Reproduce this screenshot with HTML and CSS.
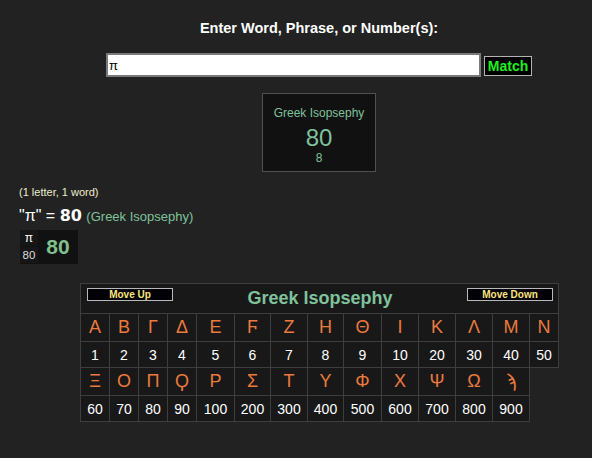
FILE: index.html
```html
<!DOCTYPE html>
<html lang="en">
<head>
<meta charset="utf-8">
<title>Greek Isopsephy</title>
<link rel="stylesheet" href="styles.css">
</head>
<body>
<div class="page">
  <div class="center">
    <div class="prompt">Enter Word, Phrase, or Number(s):</div>
    <form class="search">
      <input class="search-input" type="text" value="π">
      <button class="match-btn" type="button">Match</button>
    </form>
    <div class="result">
      <div class="result-name">Greek Isopsephy</div>
      <div class="result-value">80</div>
      <div class="result-reduced">8</div>
    </div>
  </div>

  <div class="summary">
    <div class="counts">(1 letter, 1 word)</div>
    <div class="equation"><span class="quote">"π"</span> = <span class="total">80</span> <span class="cipher">(Greek Isopsephy)</span></div>
    <div class="breakdown">
      <div class="letter-col">
        <div class="letter-cell">π</div>
        <div class="letter-cell val">80</div>
      </div>
      <div class="sum">80</div>
    </div>
  </div>

  <div class="chart">
    <div class="chart-head">
      <button class="move-btn" type="button">Move Up</button>
      <div class="chart-title">Greek Isopsephy</div>
      <button class="move-btn" type="button">Move Down</button>
    </div>
    <div class="cell ch">Α</div><div class="cell ch">Β</div><div class="cell ch">Γ</div><div class="cell ch">Δ</div><div class="cell ch">Ε</div><div class="cell ch">Ϝ</div><div class="cell ch">Ζ</div><div class="cell ch">Η</div><div class="cell ch">Θ</div><div class="cell ch">Ι</div><div class="cell ch">Κ</div><div class="cell ch">Λ</div><div class="cell ch">Μ</div><div class="cell ch">Ν</div>
    <div class="cell num">1</div><div class="cell num">2</div><div class="cell num">3</div><div class="cell num">4</div><div class="cell num">5</div><div class="cell num">6</div><div class="cell num">7</div><div class="cell num">8</div><div class="cell num">9</div><div class="cell num">10</div><div class="cell num">20</div><div class="cell num">30</div><div class="cell num">40</div><div class="cell num">50</div>
    <div class="cell ch">Ξ</div><div class="cell ch">Ο</div><div class="cell ch">Π</div><div class="cell ch">Ϙ</div><div class="cell ch">Ρ</div><div class="cell ch">Σ</div><div class="cell ch">Τ</div><div class="cell ch">Υ</div><div class="cell ch">Φ</div><div class="cell ch">Χ</div><div class="cell ch">Ψ</div><div class="cell ch">Ω</div><div class="cell ch">ϡ</div>
    <div class="cell num row-start">60</div><div class="cell num">70</div><div class="cell num">80</div><div class="cell num">90</div><div class="cell num">100</div><div class="cell num">200</div><div class="cell num">300</div><div class="cell num">400</div><div class="cell num">500</div><div class="cell num">600</div><div class="cell num">700</div><div class="cell num">800</div><div class="cell num">900</div>
  </div>
</div>
</body>
</html>
```

FILE: styles.css
```css
* { box-sizing: border-box; }

html, body {
  margin: 0;
  padding: 0;
  background: #222222;
}

body {
  font-family: "Liberation Sans", Arial, "DejaVu Sans", sans-serif;
  color: #ffffff;
}

.page {
  padding-top: 19px;
}

.center {
  padding-left: 46px;
  display: flex;
  flex-direction: column;
  align-items: center;
}

.prompt {
  font-size: 14.5px;
  font-weight: bold;
  line-height: 18px;
  height: 18px;
}

.search {
  margin: 16px 0 0 0;
  display: flex;
  align-items: center;
  gap: 3px;
}

.search-input {
  width: 375px;
  height: 24px;
  border: 2px solid #7a7a7a;
  background: #ffffff;
  color: #000000;
  font-family: "Liberation Sans", Arial, sans-serif;
  font-size: 13px;
  padding: 0 1px;
  margin: 0;
  outline: none;
}

.match-btn {
  width: 48px;
  height: 20px;
  margin-top: 2px;
  background: #000000;
  border: 1px solid #b4b4b4;
  color: #22ee22;
  font-family: "Liberation Sans", Arial, sans-serif;
  font-size: 14px;
  font-weight: bold;
  padding: 0;
  line-height: 18px;
}

.result {
  margin-top: 16px;
  width: 114px;
  height: 79px;
  background: #111111;
  border: 1px solid #505050;
  padding-top: 12px;
  display: flex;
  flex-direction: column;
  align-items: center;
  color: #7fc29b;
}

.result-name {
  font-size: 12px;
  line-height: 14px;
}

.result-value {
  margin-top: 4px;
  font-size: 24px;
  line-height: 28px;
}

.result-reduced {
  font-size: 12px;
  line-height: 12px;
}

.summary {
  padding-left: 19px;
  margin-top: 13px;
}

.counts {
  font-size: 11px;
  line-height: 14px;
  color: #efebc8;
}

.equation {
  margin-top: 7px;
  font-size: 16px;
  line-height: 20px;
  height: 20px;
  white-space: nowrap;
}

.total {
  font-family: "DejaVu Sans", sans-serif;
  font-weight: bold;
  font-size: 16px;
}

.cipher {
  font-size: 13px;
  color: #7fc29b;
}

.breakdown {
  margin-top: 4px;
  margin-left: 1px;
  width: 58px;
  height: 34px;
  background: #111111;
  display: flex;
}

.letter-col {
  width: 18px;
  display: flex;
  flex-direction: column;
  gap: 1px;
}

.letter-cell {
  height: 16px;
  background: #161616;
  font-size: 12px;
  line-height: 16px;
  text-align: center;
  color: #ffffff;
}

.letter-cell.val {
  color: #dcdcdc;
  font-size: 11.5px;
}

.sum {
  flex: 1;
  display: flex;
  align-items: center;
  justify-content: center;
  font-size: 21px;
  font-weight: bold;
  color: #80c08f;
}

.chart {
  margin-top: 19px;
  margin-left: 80px;
  width: fit-content;
  display: grid;
  grid-template-columns: 29px 29px 29px 29px 38px 36px 37px 36px 38px 37px 37px 37px 37px 29px;
  grid-template-rows: 30px 28px 26px 28px 26px;
  border-left: 1px solid #3e3e3e;
  border-top: 1px solid #3e3e3e;
}

.chart-head {
  grid-column: 1 / -1;
  background: #181818;
  border-right: 1px solid #3e3e3e;
  border-bottom: 1px solid #3e3e3e;
  display: flex;
  align-items: flex-start;
  padding: 4px 5px 0 6px;
}

.move-btn {
  width: 86px;
  height: 13px;
  background: #000006;
  border: 1px solid #b8b8b8;
  color: #fbe57f;
  font-family: "Liberation Sans", Arial, sans-serif;
  font-size: 10px;
  font-weight: bold;
  line-height: 11px;
  padding: 0;
  margin: 0;
}

.chart-title {
  flex: 1;
  text-align: center;
  font-size: 18px;
  font-weight: bold;
  line-height: 20px;
  color: #7fc29b;
}

.cell {
  background: #181818;
  border-right: 1px solid #3e3e3e;
  border-bottom: 1px solid #3e3e3e;
  display: flex;
  align-items: center;
  justify-content: center;
}

.ch {
  font-size: 18px;
  color: #ec7a3e;
}

.num {
  font-size: 14px;
  color: #ffffff;
}

.row-start {
  grid-column-start: 1;
}
```
